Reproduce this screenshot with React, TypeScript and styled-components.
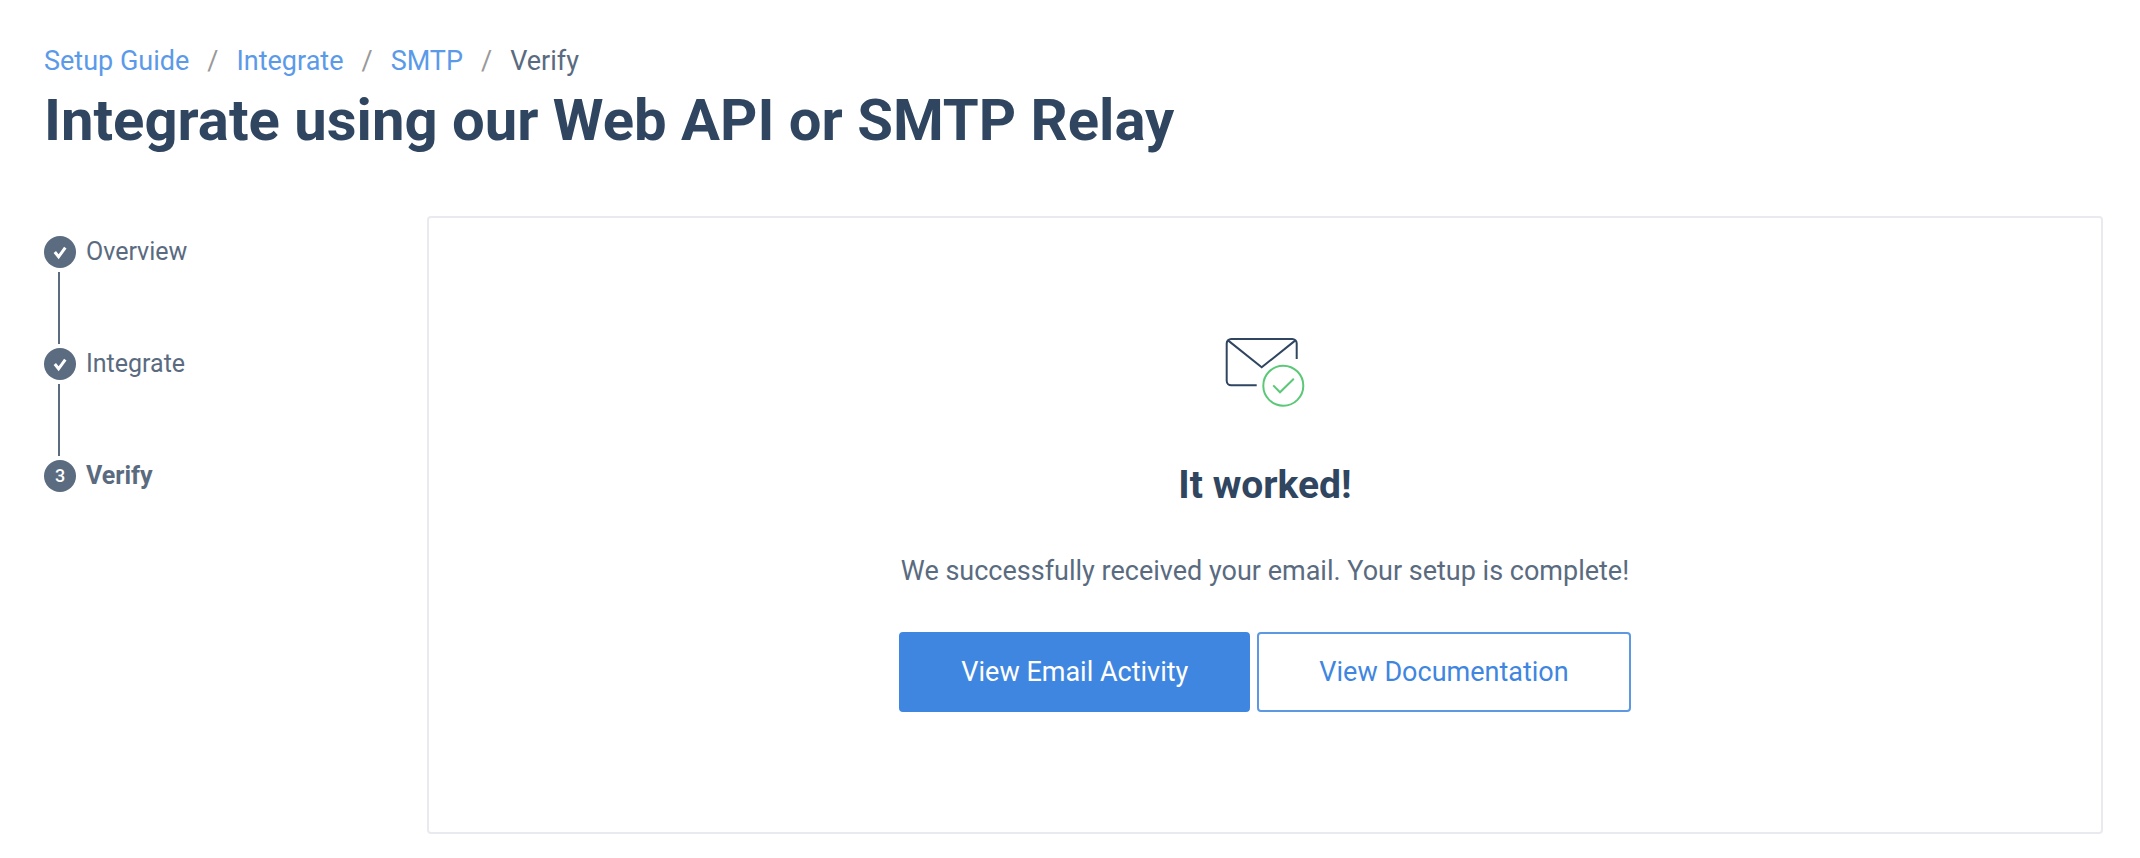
import React from 'react';
import styled, { createGlobalStyle } from 'styled-components';

const color = {
  heading: '#2f4560',
  body: '#5a6b80',
  slate: '#5b6b80',
  link: '#5b9ae9',
  primary: '#3f86e0',
  outline: '#5d99e2',
  divider: '#999999',
  border: '#e9eaf0',
  navy: '#2f4560',
  green: '#5bc878',
};

const GlobalStyle = createGlobalStyle`
  *, *::before, *::after { box-sizing: border-box; }
  body {
    margin: 0;
    background: #ffffff;
    color: ${color.body};
    font-family: Roboto, "Liberation Sans", sans-serif;
    font-size: 27px;
    line-height: 34px;
  }
`;

const Page = styled.div`
  padding: 44px 37px 24px 44px;
`;

const Crumbs = styled.ol`
  display: flex;
  flex-wrap: wrap;
  margin: 0 0 6px;
  padding: 0;
  list-style: none;
`;

const Crumb = styled.li`
  & + &::before {
    content: '/';
    margin: 0 18px;
    color: ${color.divider};
  }
`;

const CrumbLink = styled.a`
  color: ${color.link};
  text-decoration: none;

  &:hover { text-decoration: underline; }
`;

const PageTitle = styled.h1`
  margin: 0 0 60px;
  color: ${color.heading};
  font-size: 58px;
  font-weight: 700;
  line-height: 72px;
`;

const Layout = styled.div`
  display: grid;
  grid-template-columns: 383px minmax(0, 1fr);
  align-items: start;
`;

const Steps = styled.ol`
  margin: 0;
  padding: 20px 0 0;
  list-style: none;
`;

const Step = styled.li<{ $current?: boolean }>`
  font-size: 25px;
  font-weight: ${(p) => (p.$current ? 700 : 400)};
  line-height: 32px;

  &:not(:last-child)::after {
    content: '';
    display: block;
    width: 2px;
    height: 72px;
    margin: 4px 14px;
    background: ${color.slate};
  }
`;

const StepLabel = styled.div`
  display: flex;
  align-items: center;
  gap: 10px;
`;

const StepMarker = styled.span`
  display: flex;
  align-items: center;
  justify-content: center;
  width: 32px;
  height: 32px;
  border-radius: 50%;
  background: ${color.slate};
  color: #ffffff;
  font-size: 18px;
  font-weight: 500;
`;

const Panel = styled.main`
  display: flex;
  flex-direction: column;
  align-items: center;
  padding: 120px 24px;
  border: 2px solid ${color.border};
  border-radius: 4px;
  text-align: center;
`;

const PanelTitle = styled.h2`
  margin: 53px 0 45px;
  color: ${color.heading};
  font-size: 39px;
  font-weight: 700;
  line-height: 48px;
`;

const Message = styled.p`
  margin: 0 0 44px;
`;

const Actions = styled.div`
  display: flex;
  flex-wrap: wrap;
  justify-content: center;
  gap: 7px;
`;

const Button = styled.button<{ $variant: 'primary' | 'secondary' }>`
  height: 80px;
  padding: 0 60px;
  border: 2px solid ${(p) => (p.$variant === 'primary' ? color.primary : color.outline)};
  border-radius: 4px;
  background: ${(p) => (p.$variant === 'primary' ? color.primary : '#ffffff')};
  color: ${(p) => (p.$variant === 'primary' ? '#ffffff' : color.primary)};
  font: inherit;
  cursor: pointer;
`;

const CheckMark = () => (
  <svg width="32" height="32" viewBox="0 0 32 32" fill="none" aria-label="Complete" role="img">
    <path d="M10.8 16 14.6 20.8 21.3 11.6" stroke="#ffffff" strokeWidth="3" />
  </svg>
);

const EnvelopeIcon = () => (
  <svg width="80" height="70" viewBox="0 0 80 70" fill="none" strokeWidth="2" aria-hidden="true">
    <g stroke={color.navy}>
      <path d="M31.7 47.3H6.2a4.5 4.5 0 0 1-4.5-4.5V5.5A4.5 4.5 0 0 1 6.2 1h61a4.5 4.5 0 0 1 4.5 4.5V21" />
      <path d="M3 2.4 36.7 29.3 70.4 2.4" />
    </g>
    <g stroke={color.green}>
      <circle cx="58.3" cy="47.7" r="20" />
      <path d="M48.2 47.4 55 54.3 68.8 40.8" />
    </g>
  </svg>
);

const trail = ['Setup Guide', 'Integrate', 'SMTP'];
const steps = [
  { label: 'Overview', done: true },
  { label: 'Integrate', done: true },
  { label: 'Verify', done: false },
];

export default function App() {
  return (
    <>
      <GlobalStyle />
      <Page>
        <header>
          <nav aria-label="Breadcrumb">
            <Crumbs>
              {trail.map((label) => (
                <Crumb key={label}>
                  <CrumbLink href="#">{label}</CrumbLink>
                </Crumb>
              ))}
              <Crumb aria-current="page">Verify</Crumb>
            </Crumbs>
          </nav>
          <PageTitle>Integrate using our Web API or SMTP Relay</PageTitle>
        </header>
        <Layout>
          <Steps>
            {steps.map((step, index) => (
              <Step key={step.label} $current={!step.done}>
                <StepLabel>
                  <StepMarker>{step.done ? <CheckMark /> : index + 1}</StepMarker>
                  {step.label}
                </StepLabel>
              </Step>
            ))}
          </Steps>
          <Panel>
            <EnvelopeIcon />
            <PanelTitle>It worked!</PanelTitle>
            <Message>We successfully received your email. Your setup is complete!</Message>
            <Actions>
              <Button type="button" $variant="primary">View Email Activity</Button>
              <Button type="button" $variant="secondary">View Documentation</Button>
            </Actions>
          </Panel>
        </Layout>
      </Page>
    </>
  );
}
